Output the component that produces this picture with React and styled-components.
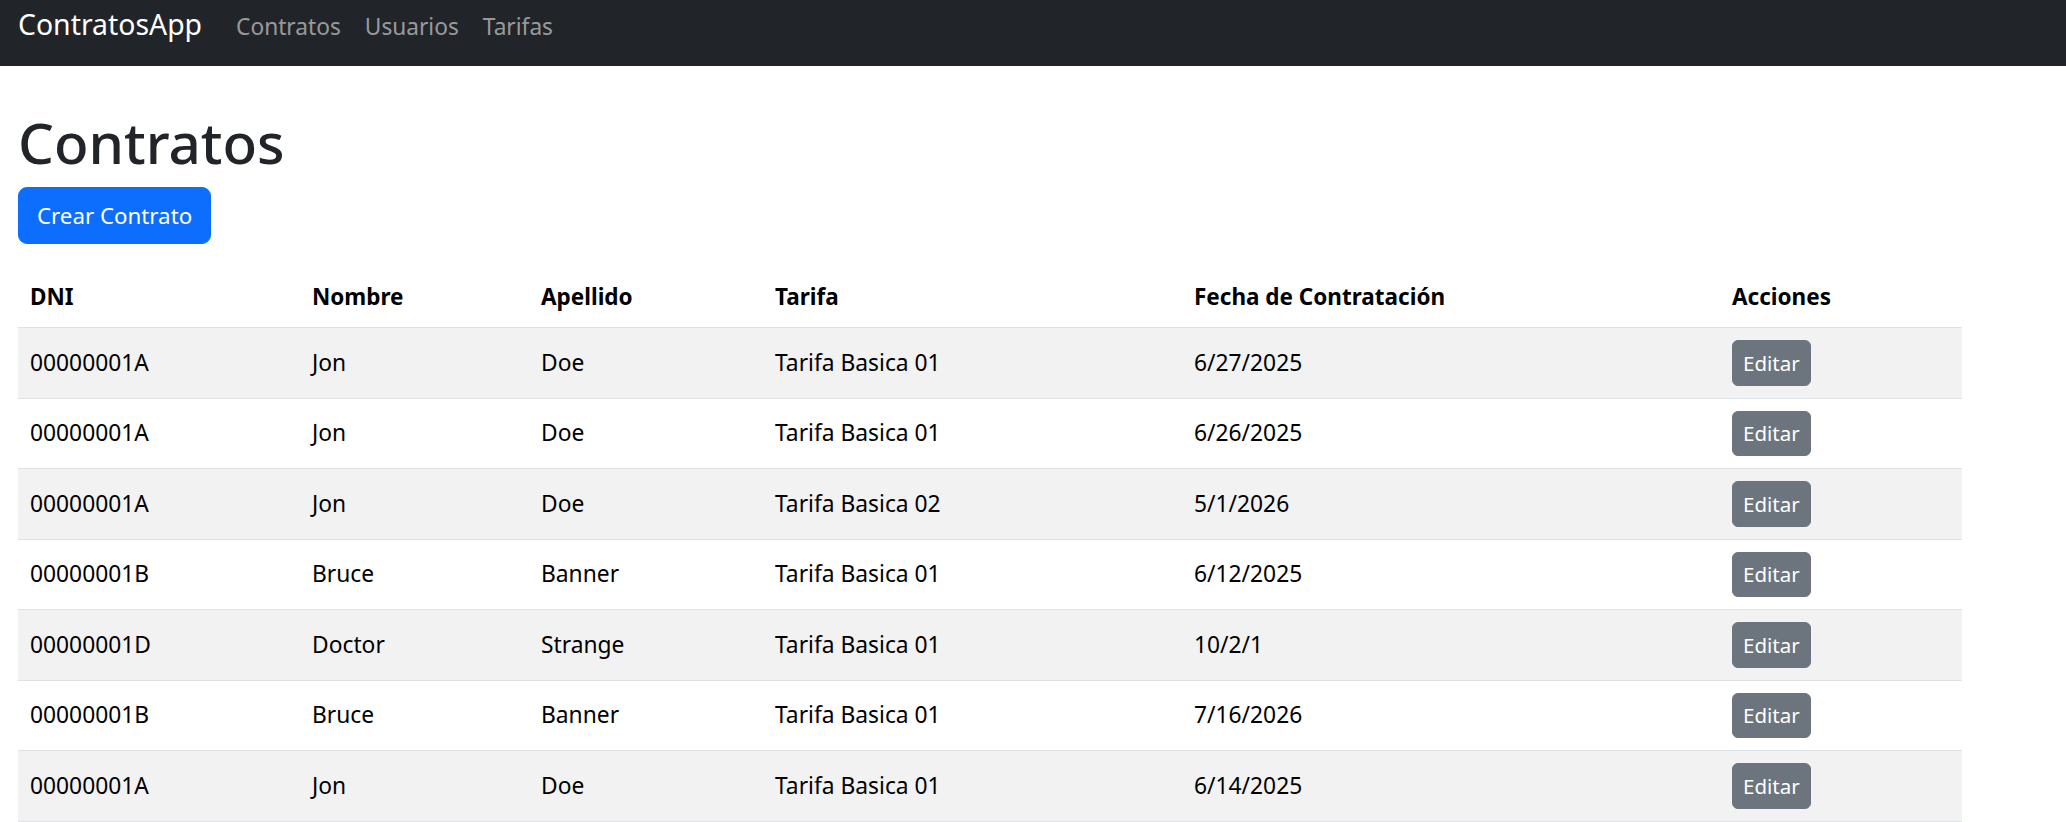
import React from 'react';
import styled, { createGlobalStyle } from 'styled-components';

const contratos = [
    { dni: '00000001A', nombre: 'Jon', apellido: 'Doe', tarifa: 'Tarifa Basica 01', fecha: '6/27/2025' },
    { dni: '00000001A', nombre: 'Jon', apellido: 'Doe', tarifa: 'Tarifa Basica 01', fecha: '6/26/2025' },
    { dni: '00000001A', nombre: 'Jon', apellido: 'Doe', tarifa: 'Tarifa Basica 02', fecha: '5/1/2026' },
    { dni: '00000001B', nombre: 'Bruce', apellido: 'Banner', tarifa: 'Tarifa Basica 01', fecha: '6/12/2025' },
    { dni: '00000001D', nombre: 'Doctor', apellido: 'Strange', tarifa: 'Tarifa Basica 01', fecha: '10/2/1' },
    { dni: '00000001B', nombre: 'Bruce', apellido: 'Banner', tarifa: 'Tarifa Basica 01', fecha: '7/16/2026' },
    { dni: '00000001A', nombre: 'Jon', apellido: 'Doe', tarifa: 'Tarifa Basica 01', fecha: '6/14/2025' },
];

// column widths taken from the reference
const columns = [
    { label: 'DNI', width: 282 },
    { label: 'Nombre', width: 229 },
    { label: 'Apellido', width: 234 },
    { label: 'Tarifa', width: 419 },
    { label: 'Fecha de Contratación', width: 538 },
    { label: 'Acciones', width: 242 },
];

function App() {
    return (
        <>
            <GlobalStyle />
            <Navbar>
                <Brand>ContratosApp</Brand>
                <NavLinks>
                    <NavLink>Contratos</NavLink>
                    <NavLink>Usuarios</NavLink>
                    <NavLink>Tarifas</NavLink>
                </NavLinks>
            </Navbar>
            <Main>
                <Title>Contratos</Title>
                <BtnPrimary>Crear Contrato</BtnPrimary>
                <Table>
                    <colgroup>
                        {columns.map(c => <col key={c.label} style={{ width: c.width }} />)}
                    </colgroup>
                    <thead>
                        <tr>
                            {columns.map(c => <Th key={c.label}>{c.label}</Th>)}
                        </tr>
                    </thead>
                    <tbody>
                        {contratos.map((c, idx) => (
                            <Row key={idx} $striped={idx % 2 === 0}>
                                <Td>{c.dni}</Td>
                                <Td>{c.nombre}</Td>
                                <Td>{c.apellido}</Td>
                                <Td>{c.tarifa}</Td>
                                <Td>{c.fecha}</Td>
                                <Td><BtnEdit>Editar</BtnEdit></Td>
                            </Row>
                        ))}
                    </tbody>
                </Table>
            </Main>
        </>
    );
}

export default App;

const GlobalStyle = createGlobalStyle`
    * { box-sizing: border-box; }
    body {
        margin: 0;
        background: #fff;
        color: #212529;
        font-family: "Noto Sans", "Open Sans", sans-serif;
        font-size: 22.8px;
        line-height: 1.5;
    }
`
const Navbar = styled.nav`
    display: flex;
    align-items: baseline;
    height: 66px;
    padding: 2px 18px 0 18px;
    background: #212529;
`
const Brand = styled.a`
    font-size: 28.4px;
    line-height: 44px;
    color: #fff;
    margin-right: 22px;
    white-space: nowrap;
`
const NavLinks = styled.div`
    display: flex;
    align-items: baseline;
`
const NavLink = styled.a`
    font-size: 22.7px;
    line-height: 36px;
    padding: 0 12px;
    color: rgba(255, 255, 255, 0.55);
`
const Main = styled.main`
    padding: 0 18px;
`
const Title = styled.h1`
    margin: 40px 0 9px 0;
    font-size: 56.6px;
    font-weight: 500;
    line-height: 72px;
    color: #212529;
`
const BtnPrimary = styled.button`
    display: block;
    height: 57px;
    padding: 0 18px;
    font-family: inherit;
    font-size: 22.3px;
    color: #fff;
    background: #0d6efd;
    border: 1px solid #0d6efd;
    border-radius: 9px;
`
const Table = styled.table`
    margin-top: 23px;
    width: 1944px;
    table-layout: fixed;
    border-collapse: collapse;
    color: #000;
`
const Th = styled.th`
    text-align: left;
    padding: 12px;
    font-size: 22.5px;
    font-weight: 700;
    line-height: 36px;
    border-bottom: 1px solid #dee2e6;
`
const Row = styled.tr`
    background: ${props => props.$striped ? '#f2f2f2' : '#fff'};
    border-bottom: 1px solid #dee2e6;
`
const Td = styled.td`
    padding: 12px;
    line-height: 36px;
    vertical-align: baseline;
`
const BtnEdit = styled.button`
    height: 45.5px;
    padding: 0 10px;
    font-family: inherit;
    font-size: 20.5px;
    line-height: 32px;
    color: #fff;
    background: #6c757d;
    border: 1px solid #6c757d;
    border-radius: 6px;
`
